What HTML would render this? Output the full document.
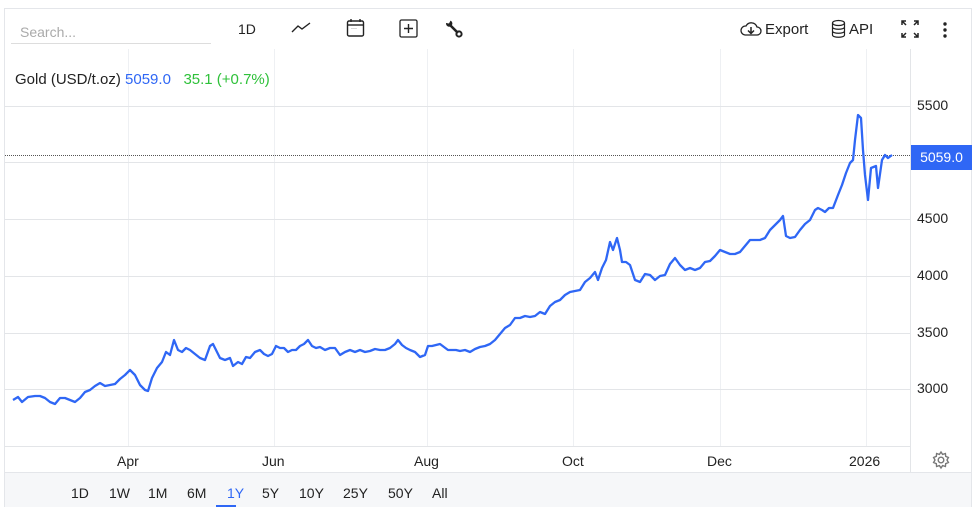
<!DOCTYPE html>
<html><head><meta charset="utf-8"><style>
body{margin:0;background:#fff;font-family:"Liberation Sans",sans-serif;}
.wrap{position:relative;width:980px;height:521px;overflow:hidden;}
.box{position:absolute;left:4px;top:8px;width:968px;height:499px;border:1px solid #e4e6ea;box-sizing:border-box;}
.t{position:absolute;font-size:14px;color:#222;white-space:nowrap;}
</style></head><body><div class="wrap">
<div class="box"></div>
<div class="t" style="left:20px;top:24px;color:#aaa;">Search...</div>
<div style="position:absolute;left:11px;top:43px;width:200px;height:1px;background:#ddd"></div>
<div class="t" style="left:238px;top:21px;">1D</div>
<svg style="position:absolute;left:290px;top:20px" width="22" height="16"><path d="M2 12 L8 6 L12 9 L20 3" fill="none" stroke="#222" stroke-width="1.4"/></svg>
<svg style="position:absolute;left:346px;top:18px" width="20" height="20"><rect x="1.5" y="3" width="16" height="15" rx="1.5" fill="none" stroke="#222" stroke-width="1.4"/><line x1="1.5" y1="7" x2="17.5" y2="7" stroke="#222" stroke-width="1.4"/><line x1="5" y1="1" x2="5" y2="4" stroke="#222" stroke-width="1.4"/><line x1="14" y1="1" x2="14" y2="4" stroke="#222" stroke-width="1.4"/><text x="5" y="12" font-size="6" fill="#222">···</text></svg>
<svg style="position:absolute;left:399px;top:19px" width="20" height="20"><rect x="1" y="1" width="17" height="17" rx="1.5" fill="none" stroke="#222" stroke-width="1.3"/><path d="M9.5 5v9M5 9.5h9" stroke="#222" stroke-width="1.4"/></svg>
<svg style="position:absolute;left:444px;top:19px" width="20" height="20"><path d="M5 5 L14 14" stroke="#222" stroke-width="2.6"/><path d="M2 4 A3.2 3.2 0 1 0 6.5 1.6 L5 4.5 Z" fill="#222"/><circle cx="15" cy="15" r="2.6" fill="none" stroke="#222" stroke-width="2"/></svg>
<svg style="position:absolute;left:739px;top:20px" width="24" height="18"><path d="M6 15 H18 A4 4 0 0 0 18 7 A6 6 0 0 0 7 6 A4.5 4.5 0 0 0 6 15Z" fill="none" stroke="#222" stroke-width="1.3"/><path d="M12 7v6M9 10.5l3 3 3-3" stroke="#222" stroke-width="1.5" fill="none"/></svg>
<div class="t" style="left:765px;top:21px;font-size:15px;">Export</div>
<svg style="position:absolute;left:831px;top:19px" width="16" height="20"><ellipse cx="7.5" cy="4" rx="6" ry="2.5" fill="none" stroke="#222" stroke-width="1.2"/><path d="M1.5 4v12c0 3 12 3 12 0V4M1.5 8c0 3 12 3 12 0M1.5 12c0 3 12 3 12 0" fill="none" stroke="#222" stroke-width="1.2"/></svg>
<div class="t" style="left:849px;top:21px;font-size:15px;">API</div>
<svg style="position:absolute;left:900px;top:19px" width="20" height="20"><path d="M2 6V2h4M14 2h4v4M18 14v4h-4M6 18H2v-4M2 2l4 4M18 2l-4 4M18 18l-4-4M2 18l4-4" fill="none" stroke="#222" stroke-width="1.5"/></svg>
<svg style="position:absolute;left:941px;top:21px" width="8" height="18"><circle cx="4" cy="3" r="1.7" fill="#222"/><circle cx="4" cy="9" r="1.7" fill="#222"/><circle cx="4" cy="15" r="1.7" fill="#222"/></svg>
<svg style="position:absolute;left:0;top:0" width="980" height="521">
<g stroke="#eef0f3" stroke-width="1">
<line x1="128.5" y1="49" x2="128.5" y2="446"/><line x1="274.5" y1="49" x2="274.5" y2="446"/><line x1="427.5" y1="49" x2="427.5" y2="446"/><line x1="573.5" y1="49" x2="573.5" y2="446"/><line x1="720.5" y1="49" x2="720.5" y2="446"/><line x1="866.5" y1="49" x2="866.5" y2="446"/>
</g>
<g stroke="#e3e5e8" stroke-width="1">
<line x1="5" y1="106.5" x2="910" y2="106.5"/><line x1="5" y1="162.5" x2="910" y2="162.5"/><line x1="5" y1="219.5" x2="910" y2="219.5"/><line x1="5" y1="276.5" x2="910" y2="276.5"/><line x1="5" y1="333.5" x2="910" y2="333.5"/><line x1="5" y1="389.5" x2="910" y2="389.5"/>
<line x1="5" y1="446.5" x2="910" y2="446.5"/><line x1="910.5" y1="49" x2="910.5" y2="472"/>
</g>
<line x1="5" y1="155.5" x2="910" y2="155.5" stroke="#555" stroke-dasharray="1 1"/>
<polyline fill="none" stroke="#2f67f5" stroke-width="2.3" stroke-linejoin="round" points="13,400 18,397 22,402 28,397 35,396 40,396 45,398 50,402 55,404 60,398 65,398 70,400 75,402 80,398 85,392 90,390 95,386 100,383 105,386 110,385 115,384 120,379 125,375 130,370 135,375 140,385 145,390 148,391 152,378 157,368 162,362 166,352 170,355 174,340 178,350 182,352 186,348 190,350 195,354 200,358 205,360 210,346 213,344 216,350 220,358 225,360 230,358 233,366 238,362 242,364 246,357 250,358 255,352 260,350 264,354 268,356 272,354 276,346 280,348 284,348 288,352 292,350 296,350 300,346 304,344 308,340 312,346 316,348 320,347 325,350 330,348 335,348 340,355 345,352 350,350 355,352 360,350 365,352 370,351 375,349 380,350 385,350 390,348 395,344 398,340 402,345 406,348 410,350 415,352 420,357 425,355 428,346 432,346 436,345 440,344 444,347 448,350 452,350 456,350 460,351 465,350 470,352 475,349 480,347 485,346 490,344 495,340 500,334 505,328 510,325 515,318 520,318 525,316 530,317 535,316 540,312 545,314 550,306 555,302 560,300 565,295 570,292 575,291 580,290 585,282 590,278 595,272 598,280 602,268 606,260 610,242 613,250 617,238 620,250 622,262 626,262 630,265 635,280 640,282 645,274 650,275 655,280 660,276 665,275 670,264 675,258 680,265 685,270 690,268 695,270 700,268 705,262 710,261 715,256 720,250 725,252 730,254 735,254 740,252 745,246 750,240 755,240 760,240 765,238 770,230 775,225 780,220 783,216 786,236 790,238 795,237 800,230 805,224 810,220 815,210 818,208 822,210 825,212 829,208 833,208 838,195 842,185 846,173 850,163 853,160 855,140 858,115 861,118 863,150 865,175 868,200 871,168 876,166 878,188 882,160 885,155 888,158 892,155"/>
</svg>
<div class="t" style="left:15px;top:71px;font-size:15px;">Gold (USD/t.oz) <span style="color:#2f67f5">5059.0</span>&nbsp;&nbsp;&nbsp;<span style="color:#2fc13a">35.1 (+0.7%)</span></div>
<div class="t" style="left:917px;top:97px;">5500</div>
<div style="position:absolute;left:911px;top:145px;width:61px;height:25px;background:#2f67f5;color:#fff;font-size:14px;line-height:25px;text-align:center">5059.0</div>
<div class="t" style="left:917px;top:210px;">4500</div>
<div class="t" style="left:917px;top:267px;">4000</div>
<div class="t" style="left:917px;top:324px;">3500</div>
<div class="t" style="left:917px;top:380px;">3000</div>
<div class="t" style="left:117px;top:453px;">Apr</div>
<div class="t" style="left:262px;top:453px;">Jun</div>
<div class="t" style="left:414px;top:453px;">Aug</div>
<div class="t" style="left:562px;top:453px;">Oct</div>
<div class="t" style="left:707px;top:453px;">Dec</div>
<div class="t" style="left:849px;top:453px;">2026</div>
<svg style="position:absolute;left:931px;top:450px" width="20" height="20"><circle cx="10" cy="10" r="2.8" fill="none" stroke="#777" stroke-width="1.4"/><path d="M10 2l1.6 2.4 2.8-.9.3 2.9 2.7 1.1-1.4 2.5 1.4 2.5-2.7 1.1-.3 2.9-2.8-.9L10 18l-1.6-2.4-2.8.9-.3-2.9-2.7-1.1L4 10 2.6 7.5l2.7-1.1.3-2.9 2.8.9z" fill="none" stroke="#777" stroke-width="1.4"/></svg>
<div style="position:absolute;left:5px;top:472px;width:966px;height:34px;background:#f6f7f9;border-top:1px solid #e4e6ea"></div>
<div class="t" style="left:71px;top:485px;">1D</div>
<div class="t" style="left:109px;top:485px;">1W</div>
<div class="t" style="left:148px;top:485px;">1M</div>
<div class="t" style="left:187px;top:485px;">6M</div>
<div class="t" style="left:227px;top:485px;color:#2f67f5">1Y</div>
<div style="position:absolute;left:216px;top:505px;height:2px;background:#2f67f5;width:20px"></div>
<div class="t" style="left:262px;top:485px;">5Y</div>
<div class="t" style="left:299px;top:485px;">10Y</div>
<div class="t" style="left:343px;top:485px;">25Y</div>
<div class="t" style="left:388px;top:485px;">50Y</div>
<div class="t" style="left:432px;top:485px;">All</div>
</div></body></html>
